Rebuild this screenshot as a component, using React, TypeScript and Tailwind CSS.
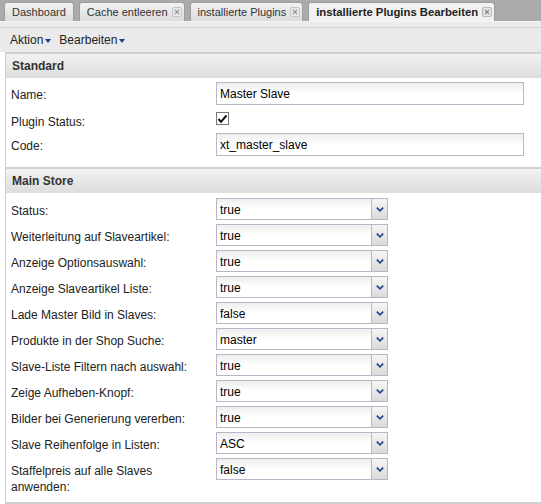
import React from "react";

const font = { fontFamily: '"Liberation Sans", Arial, sans-serif' };

function CloseIcon({ active }: { active?: boolean }) {
  return (
    <span
      className={`ml-[4px] inline-flex h-[10px] w-[10px] items-center justify-center rounded-[2px] border ${
        active ? "border-[#b8b8b8] bg-[#e4e4e4]" : "border-[#c4c4c4] bg-[#e8e8e8]"
      }`}
    >
      <svg width="6" height="6" viewBox="0 0 6 6">
        <path d="M1 1L5 5M5 1L1 5" stroke={active ? "#8a8a8a" : "#9a9a9a"} strokeWidth="1.3" />
      </svg>
    </span>
  );
}

function Tab({ label, close, active }: { label: string; close?: boolean; active?: boolean }) {
  return (
    <div
      className={`flex h-[19px] items-center rounded-t-[3px] border border-b-0 pl-[7px] ${
        close ? "pr-[2px]" : "pr-[7px]"
      } ${
        active
          ? "border-[#9a9a9a] bg-[#f1f1f1] text-[11.3px] font-bold text-[#222]"
          : "border-[#9f9f9f] bg-gradient-to-b from-[#f2f2f2] to-[#dcdcdc] text-[11px] text-[#333]"
      }`}
    >
      <span>{label}</span>
      {close && <CloseIcon active={active} />}
    </div>
  );
}

function Arrow() {
  return (
    <svg width="6" height="4" viewBox="0 0 6 4" className="ml-[2px] mt-[1px]">
      <path d="M0 0H6L3 4Z" fill="#15428b" />
    </svg>
  );
}

function TextField({ value }: { value: string }) {
  return (
    <div className="flex h-[23px] w-[308px] items-center border border-[#b5b8c8] bg-gradient-to-b from-[#eeeeee] via-white to-white pl-[3px] pt-[1px] text-[12px] text-black">
      {value}
    </div>
  );
}

function Select({ value }: { value: string }) {
  return (
    <div className="flex h-[22px] w-[172px] border border-[#b5b8c8]">
      <div className="flex flex-1 items-center bg-gradient-to-b from-[#eeeeee] via-white to-white pl-[3px] pt-[1px] text-[12px] text-black">
        {value}
      </div>
      <div className="flex w-[16px] items-center justify-center border-l border-[#b5b8c8] bg-gradient-to-b from-[#f6f6f6] to-[#dadada]">
        <svg width="8" height="5" viewBox="0 0 8 5">
          <path d="M0.8 0.6L4 3.8L7.2 0.6" stroke="#1f4a8a" strokeWidth="1.7" fill="none" />
        </svg>
      </div>
    </div>
  );
}

function Row({ label, children, h = 26 }: { label: React.ReactNode; children: React.ReactNode; h?: number }) {
  return (
    <div className="flex" style={{ minHeight: h }}>
      <div className="w-[205px] pt-[5px] text-[12px] leading-[16px] text-[#222]">{label}</div>
      <div>{children}</div>
    </div>
  );
}

function Header({ title }: { title: string }) {
  return (
    <div className="flex h-[26px] items-center border-t-2 border-[#d0d0d0] bg-gradient-to-b from-[#f2f2f2] to-[#dddddd] pl-[6px] text-[12px] font-bold text-[#333]">
      {title}
    </div>
  );
}

const mainRows: [React.ReactNode, string][] = [
  ["Status:", "true"],
  ["Weiterleitung auf Slaveartikel:", "true"],
  ["Anzeige Optionsauswahl:", "true"],
  ["Anzeige Slaveartikel Liste:", "true"],
  ["Lade Master Bild in Slaves:", "false"],
  ["Produkte in der Shop Suche:", "master"],
  ["Slave-Liste Filtern nach auswahl:", "true"],
  ["Zeige Aufheben-Knopf:", "true"],
  ["Bilder bei Generierung vererben:", "true"],
  ["Slave Reihenfolge in Listen:", "ASC"],
];

export default function App() {
  return (
    <div className="h-[504px] w-[541px] overflow-hidden bg-white" style={font}>
      {/* tab strip */}
      <div className="flex h-[21px] items-end gap-[5px] bg-[#ababab] pl-[4px]">
        <Tab label="Dashboard" />
        <Tab label="Cache entleeren" close />
        <Tab label="installierte Plugins" close />
        <Tab label="installierte Plugins Bearbeiten" close active />
      </div>
      <div className="h-[6px] border-t border-[#f4f4f4] bg-[#ececec]" />
      {/* toolbar */}
      <div className="flex h-[25px] items-center border-t border-[#cfcfcf] bg-[#eaeaea] pl-[10px] text-[12px] text-[#222]">
        <span className="flex items-center">
          Aktion
          <Arrow />
        </span>
        <span className="ml-[8px] flex items-center">
          Bearbeiten
          <Arrow />
        </span>
      </div>
      {/* body */}
      <div className="ml-[5px] border-l border-[#d0d0d0]">
        <Header title="Standard" />
        <div className="px-[5px] pb-[8px] pt-[4px]">
          <Row label="Name:" h={27}>
            <TextField value="Master Slave" />
          </Row>
          <Row label="Plugin Status:" h={24}>
            <div className="flex h-[16px] items-center pt-[3px]">
              <div className="flex h-[13px] w-[13px] items-center justify-center border border-[#777] bg-white">
                <svg width="11" height="10" viewBox="0 0 11 10">
                  <path d="M1.5 5L4 7.8L9.5 1.5" stroke="#111" strokeWidth="2" fill="none" />
                </svg>
              </div>
            </div>
          </Row>
          <Row label="Code:" h={26}>
            <TextField value="xt_master_slave" />
          </Row>
        </div>
        <Header title="Main Store" />
        <div className="px-[5px] pt-[5px] pb-[7px]">
          {mainRows.map(([l, v], i) => (
            <Row key={i} label={l}>
              <Select value={v} />
            </Row>
          ))}
          <Row
            h={36}
            label={
              <>
                Staffelpreis auf alle Slaves
                <br />
                anwenden:
              </>
            }
          >
            <Select value="false" />
          </Row>
        </div>
        <div className="h-[2px] bg-[#d0d0d0]" />
      </div>
    </div>
  );
}
